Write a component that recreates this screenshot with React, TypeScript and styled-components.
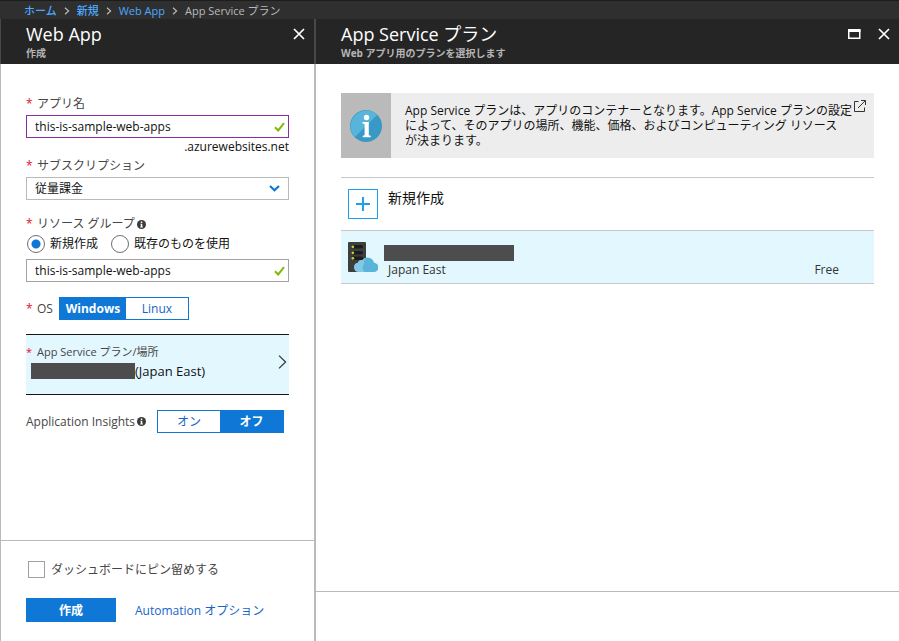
import React, { useState } from 'react';
import styled, { createGlobalStyle } from 'styled-components';

const color = {
  blue: '#0f78d7',
  link: '#1565c9',
  text: '#111',
  label: '#464646',
  line: '#bababa',
  selected: '#e3f7fe',
  redacted: '#4d4d4d',
};

const GlobalStyle = createGlobalStyle`
  * { box-sizing: border-box; }
  body {
    margin: 0;
    background: #fff;
    color: ${color.text};
    font: 12px/16px "Open Sans", "Noto Sans CJK JP", sans-serif;
  }
  button, input, select { font: inherit; color: inherit; margin: 0; }
  h1, h2, p, ul { margin: 0; padding: 0; }
`;

const Page = styled.div`
  display: flex;
  flex-direction: column;
  min-height: 100vh;
`;

const Breadcrumb = styled.nav`
  display: flex;
  align-items: center;
  gap: 7px;
  height: 19px;
  padding: 2px 24px 0;
  border-top: 1px solid #1c1c1c;
  background: #2f2f2f;
  color: #b9b9b9;
  font-size: 11px;
  line-height: 16px;
  white-space: nowrap;
`;

const Crumb = styled.a`
  color: #4ba9ff;
  font-weight: 500;
  text-decoration: none;
`;

const Blades = styled.div`
  display: flex;
  flex: 1;
`;

const Blade = styled.section<{ $main?: boolean }>`
  display: flex;
  flex-direction: column;
  ${(p) => (p.$main ? 'flex: 1; min-width: 0;' : 'flex: 0 0 316px;')}
`;

const BladeHeader = styled.header<{ $main?: boolean }>`
  display: flex;
  justify-content: space-between;
  align-items: flex-start;
  height: 45px;
  padding: 3px 9px 0 25px;
  background: #252525;
  color: #fff;
  border: solid #484848;
  border-width: ${(p) => (p.$main ? '0' : '0 2px 0 1px')};
`;

const Title = styled.h1`
  font-size: 18px;
  line-height: 24px;
  font-weight: 400;
  white-space: nowrap;
`;

const Subtitle = styled.p`
  color: #b5b5b5;
  font-size: 10px;
  line-height: 14px;
  font-weight: 700;
`;

const HeaderActions = styled.div`
  display: flex;
  gap: 16px;
  padding-top: 6px;
`;

const IconButton = styled.button`
  display: flex;
  padding: 0;
  border: 0;
  background: none;
  cursor: pointer;
`;

const BladeBody = styled.div<{ $main?: boolean }>`
  display: flex;
  flex-direction: column;
  flex: 1;
  border: solid ${color.line};
  border-width: ${(p) => (p.$main ? '0' : '0 2px 0 1px')};
`;

const Form = styled.form`
  display: flex;
  flex-direction: column;
  flex: 1;
  padding: 32px 25px 0;
`;

const Field = styled.div`
  display: flex;
  flex-direction: column;
  gap: 3px;
  margin-bottom: 15px;
`;

const FieldWithSuffix = styled(Field)`
  gap: 1px;
  margin-bottom: 3px;
`;

const GroupField = styled(Field)`
  padding-top: 1px;
`;

const Label = styled.label`
  display: flex;
  align-items: center;
  color: ${color.label};
  white-space: nowrap;
`;

const Required = styled.span`
  flex: 0 0 11px;
  color: #e81123;
`;

const InputBox = styled.div<{ $active?: boolean; $soft?: boolean }>`
  display: flex;
  align-items: center;
  height: 23px;
  padding: 0 3px 0 8px;
  border: 1px solid ${(p) => (p.$active ? '#8a2da5' : p.$soft ? color.line : '#a3a3a3')};
`;

const LabelSpaced = styled(Label)`
  margin-bottom: 2px;
`;

const TextInput = styled.input`
  flex: 1;
  min-width: 0;
  height: 21px;
  padding: 0;
  border: 0;
  outline: 0;
  background: none;
`;

const Select = styled.select`
  flex: 1;
  height: 21px;
  padding: 0;
  border: 0;
  outline: 0;
  appearance: none;
  background: none;
`;

const SelectBox = styled(InputBox)`
  padding-right: 8px;
`;

const Suffix = styled.span`
  align-self: flex-end;
`;

const Options = styled.div`
  display: flex;
  gap: 13px;
  margin-bottom: 3px;
  padding-left: 1px;
`;

const Option = styled.label`
  display: flex;
  align-items: center;
  gap: 5px;
  white-space: nowrap;
`;

const Radio = styled.input`
  appearance: none;
  width: 18px;
  height: 18px;
  border: 1px solid #6e6e6e;
  border-radius: 50%;
  background: #fff;
  &:checked {
    background: radial-gradient(circle, ${color.blue} 4px, #fff 5px);
  }
`;

const ToggleRow = styled.div`
  display: flex;
  align-items: center;
  color: ${color.label};
  white-space: nowrap;
`;

const Toggle = styled.div<{ $end?: boolean }>`
  display: flex;
  height: 23px;
  border: 1px solid ${color.blue};
  ${(p) => (p.$end ? 'margin-left: auto; margin-right: 5px;' : 'margin-left: 6px;')}
`;

const ToggleButton = styled.button<{ $on: boolean; $width: number }>`
  width: ${(p) => p.$width}px;
  padding: 0;
  border: 0;
  line-height: 21px;
  background: ${(p) => (p.$on ? color.blue : '#fff')};
  color: ${(p) => (p.$on ? '#fff' : color.link)};
  font-weight: ${(p) => (p.$on ? 700 : 400)};
`;

const PlanButton = styled.button`
  display: flex;
  justify-content: space-between;
  align-items: center;
  height: 61px;
  margin: 14px 0 15px;
  padding: 0 2px 5px 0;
  border: solid #161616;
  border-width: 1px 0;
  background: ${color.selected};
  text-align: left;
`;

const PlanLabel = styled.span`
  display: flex;
  color: ${color.label};
  font-size: 11px;
  line-height: 18px;
`;

const PlanValue = styled.span`
  display: flex;
  align-items: center;
  padding-left: 5px;
  font-size: 13px;
  line-height: 20px;
`;

const Redaction = styled.span<{ $width: number }>`
  display: block;
  width: ${(p) => p.$width}px;
  height: 16px;
  background: ${color.redacted};
`;

const LabelText = styled.span`
  margin-right: 2px;
`;

const Footer = styled.footer<{ $main?: boolean }>`
  border-top: 1px solid ${color.line};
  height: ${(p) => (p.$main ? '50px' : 'auto')};
  padding: ${(p) => (p.$main ? '0' : '20px 25px 19px')};
`;

const PinLabel = styled.label`
  display: flex;
  align-items: center;
  gap: 6px;
  padding-left: 2px;
  color: ${color.label};
`;

const Checkbox = styled.input`
  appearance: none;
  width: 17px;
  height: 17px;
  border: 1px solid #a0a0a0;
  background: #fff;
  &:checked { background: ${color.blue}; }
`;

const Actions = styled.div`
  display: flex;
  align-items: center;
  gap: 19px;
  margin-top: 20px;
`;

const PrimaryButton = styled.button`
  width: 90px;
  height: 24px;
  padding: 1px 0 0;
  border: 0;
  background: ${color.blue};
  color: #fff;
  font-weight: 700;
`;

const Link = styled.a`
  padding-top: 2px;
  color: ${color.link};
  text-decoration: none;
`;

const Content = styled.div`
  flex: 1;
  padding: 29px 25px 0;
`;

const Notice = styled.div`
  display: flex;
  min-height: 65px;
  margin-bottom: 19px;
  background: #ededed;
`;

const NoticeIcon = styled.div`
  display: flex;
  align-items: center;
  justify-content: center;
  flex: 0 0 50px;
  background: #bababa;
`;

const NoticeText = styled.p`
  flex: 1;
  padding: 10px 0 9px 14px;
  line-height: 15px;
`;

const NoticeLink = styled.a`
  padding: 7px 8px 0 0;
  color: #333;
`;

const PlanList = styled.ul`
  list-style: none;
  border-top: 1px solid #c8c8c8;
`;

const PlanItem = styled.li<{ $selected?: boolean }>`
  display: flex;
  gap: ${(p) => (p.$selected ? '6px' : '10px')};
  height: 53px;
  padding: 11px 35px 0 7px;
  border-bottom: 1px solid #c8c8c8;
  background: ${(p) => (p.$selected ? color.selected : '#fff')};
`;

const NewPlan = styled.button`
  display: flex;
  gap: 10px;
  align-items: flex-start;
  padding: 0;
  border: 0;
  background: none;
  font-size: 14px;
  line-height: 18px;
`;

const PlusBox = styled.span`
  display: flex;
  align-items: center;
  justify-content: center;
  width: 30px;
  height: 30px;
  border: 1px solid #1ba1ee;
`;

const PlanInfo = styled.div`
  display: flex;
  flex: 1;
  flex-direction: column;
  gap: 1px;
  padding-top: 3px;
`;

const PlanMeta = styled.div`
  display: flex;
  justify-content: space-between;
  padding-left: 4px;
  color: #333;
`;

const CloseIcon = () => (
  <svg width="12" height="12" viewBox="0 0 12 12" stroke="#fff" strokeWidth="1.7" fill="none">
    <path d="M1 1 11 11M11 1 1 11" />
  </svg>
);

const MaximizeIcon = () => (
  <svg width="15" height="12" viewBox="0 0 15 12" fill="none" stroke="#fff">
    <path d="M1.750 1.500V10.250h11V1.500" strokeWidth="1.500" />
    <path d="M1 2.500h12.500" strokeWidth="3" />
  </svg>
);

const CrumbArrow = () => (
  <svg width="6" height="8" viewBox="0 0 6 8" fill="none" stroke="#b9b9b9" strokeWidth="1.2">
    <path d="M1 .8 4.6 4 1 7.2" />
  </svg>
);

const CheckIcon = () => (
  <svg width="11" height="10" viewBox="0 0 11 10" fill="none" stroke="#7fba00" strokeWidth="2">
    <path d="M1 5.2 4.2 8.4 10 1.2" />
  </svg>
);

const ChevronDown = () => (
  <svg width="11" height="7" viewBox="0 0 11 7" fill="none" stroke={color.blue} strokeWidth="2.200">
    <path d="M1 1 5.500 5.200 10 1" />
  </svg>
);

const ChevronRight = () => (
  <svg width="9" height="14" viewBox="0 0 9 14" fill="none" stroke="#333" strokeWidth="1.2">
    <path d="M1 .6 7.6 7 1 13.4" />
  </svg>
);

const InfoDot = () => (
  <svg width="9" height="9" viewBox="0 0 9 9">
    <circle cx="4.5" cy="4.5" r="4.5" fill="#3a3a3a" />
    <path d="M3.8 1.6h1.5v1.3H3.8zM3.3 3.7h2v2.9h.6v.8H3.2v-.8h.6V4.5h-.5z" fill="#fff" />
  </svg>
);

const InfoBadge = () => (
  <svg width="32" height="34" viewBox="0 0 32 34">
    <circle cx="16" cy="17" r="16" fill="#3999c6" />
    <path d="M4.700 28.300A16 16 0 0 1 27.300 5.700z" fill="#59b4d9" />
    <circle cx="16.500" cy="8.500" r="2.700" fill="#fff" />
    <path d="M12.500 13h6.300v13.200l1.900.5v1.500h-8v-1.500l1.900-.5V15l-2.100-.5z" fill="#fff" />
  </svg>
);

const ExternalIcon = () => (
  <svg width="12" height="12" viewBox="0 0 12 12" fill="none" stroke="currentColor">
    <path d="M4.500 1.500h-4v10h10v-4M7 .5h4.500V5M11.300.7 4 8" />
  </svg>
);

const PlusIcon = () => (
  <svg width="14" height="14" viewBox="0 0 14 14" stroke="#1ba1ee" strokeWidth="2">
    <path d="M7 0v14M0 7h14" />
  </svg>
);

const ServerIcon = () => (
  <svg width="30" height="30" viewBox="0 0 30 30">
    <rect width="18" height="30" rx="1" fill="#3e3e3e" />
    {[3, 9, 14.5].map((y) => (
      <g key={y}>
        <rect x="3" y={y} width="12" height="3.600" rx="1.800" fill="#1c1c1c" />
        <circle cx="4.800" cy={y + 1.8} r="1.400" fill="#b8d432" />
      </g>
    ))}
    <path d="M10.500 30a4.700 4.700 0 0 1-.6-9.300 3.600 3.600 0 0 1 4.500-2.400A6.400 6.400 0 0 1 26 20.800a4.600 4.600 0 0 1-.3 9.200z" fill="#59b4d9" />
    <path d="M10.500 30a4.700 4.700 0 0 1-.6-9.300 3.600 3.600 0 0 1 4.500-2.400 6.500 6.500 0 0 1 4.200-2.900c-2.500 2-3 4-2.400 6.600-2.300 2.600-1.700 6 .7 8z" fill="#84c8e3" />
  </svg>
);

interface ToggleGroupProps {
  label: string;
  options: [string, number][];
  initial: number;
  end?: boolean;
}

const ToggleGroup = ({ label, options, initial, end }: ToggleGroupProps) => {
  const [active, setActive] = useState(initial);
  return (
    <Toggle role="group" aria-label={label} $end={end}>
      {options.map(([name, width], i) => (
        <ToggleButton
          key={name}
          type="button"
          aria-pressed={active === i}
          $on={active === i}
          $width={width}
          onClick={() => setActive(i)}
        >
          {name}
        </ToggleButton>
      ))}
    </Toggle>
  );
};

const crumbs = ['ホーム', '新規', 'Web App'];

export default function App() {
  return (
    <>
      <GlobalStyle />
      <Page>
        <Breadcrumb>
          {crumbs.map((name) => (
            <React.Fragment key={name}>
              <Crumb href="#">{name}</Crumb>
              <CrumbArrow />
            </React.Fragment>
          ))}
          <span>App Service プラン</span>
        </Breadcrumb>
        <Blades>
          <Blade>
            <BladeHeader>
              <div>
                <Title>Web App</Title>
                <Subtitle>作成</Subtitle>
              </div>
              <HeaderActions>
                <IconButton aria-label="閉じる"><CloseIcon /></IconButton>
              </HeaderActions>
            </BladeHeader>
            <BladeBody>
              <Form>
                <FieldWithSuffix>
                  <LabelSpaced htmlFor="app-name"><Required>*</Required>アプリ名</LabelSpaced>
                  <InputBox $active>
                    <TextInput id="app-name" defaultValue="this-is-sample-web-apps" />
                    <CheckIcon />
                  </InputBox>
                  <Suffix>.azurewebsites.net</Suffix>
                </FieldWithSuffix>
                <Field>
                  <Label htmlFor="subscription"><Required>*</Required>サブスクリプション</Label>
                  <SelectBox $soft>
                    <Select id="subscription"><option>従量課金</option></Select>
                    <ChevronDown />
                  </SelectBox>
                </Field>
                <GroupField>
                  <Label htmlFor="resource-group">
                    <Required>*</Required><LabelText>リソース グループ</LabelText><InfoDot />
                  </Label>
                  <Options>
                    <Option><Radio type="radio" name="group" defaultChecked />新規作成</Option>
                    <Option><Radio type="radio" name="group" />既存のものを使用</Option>
                  </Options>
                  <InputBox>
                    <TextInput id="resource-group" defaultValue="this-is-sample-web-apps" />
                    <CheckIcon />
                  </InputBox>
                </GroupField>
                <ToggleRow>
                  <Required>*</Required>OS
                  <ToggleGroup label="OS" options={[['Windows', 66], ['Linux', 62]]} initial={0} />
                </ToggleRow>
                <PlanButton type="button">
                  <span>
                    <PlanLabel><Required>*</Required>App Service プラン/場所</PlanLabel>
                    <PlanValue><Redaction $width={104} />(Japan East)</PlanValue>
                  </span>
                  <ChevronRight />
                </PlanButton>
                <ToggleRow>
                  <LabelText>Application Insights</LabelText><InfoDot />
                  <ToggleGroup label="Application Insights" options={[['オン', 62], ['オフ', 63]]} initial={1} end />
                </ToggleRow>
              </Form>
              <Footer>
                <PinLabel><Checkbox type="checkbox" />ダッシュボードにピン留めする</PinLabel>
                <Actions>
                  <PrimaryButton type="button">作成</PrimaryButton>
                  <Link href="#">Automation オプション</Link>
                </Actions>
              </Footer>
            </BladeBody>
          </Blade>
          <Blade $main>
            <BladeHeader $main>
              <div>
                <Title as="h2">App Service プラン</Title>
                <Subtitle>Web アプリ用のプランを選択します</Subtitle>
              </div>
              <HeaderActions>
                <IconButton aria-label="最大化"><MaximizeIcon /></IconButton>
                <IconButton aria-label="閉じる"><CloseIcon /></IconButton>
              </HeaderActions>
            </BladeHeader>
            <BladeBody $main>
              <Content>
                <Notice>
                  <NoticeIcon><InfoBadge /></NoticeIcon>
                  <NoticeText>
                    App Service プランは、アプリのコンテナーとなります。App Service プランの設定
                    <br />
                    によって、そのアプリの場所、機能、価格、およびコンピューティング リソース
                    <br />
                    が決まります。
                  </NoticeText>
                  <NoticeLink href="#" aria-label="詳細情報"><ExternalIcon /></NoticeLink>
                </Notice>
                <PlanList>
                  <PlanItem>
                    <NewPlan type="button"><PlusBox><PlusIcon /></PlusBox>新規作成</NewPlan>
                  </PlanItem>
                  <PlanItem $selected>
                    <ServerIcon />
                    <PlanInfo>
                      <Redaction $width={130} />
                      <PlanMeta><span>Japan East</span><span>Free</span></PlanMeta>
                    </PlanInfo>
                  </PlanItem>
                </PlanList>
              </Content>
              <Footer $main />
            </BladeBody>
          </Blade>
        </Blades>
      </Page>
    </>
  );
}
